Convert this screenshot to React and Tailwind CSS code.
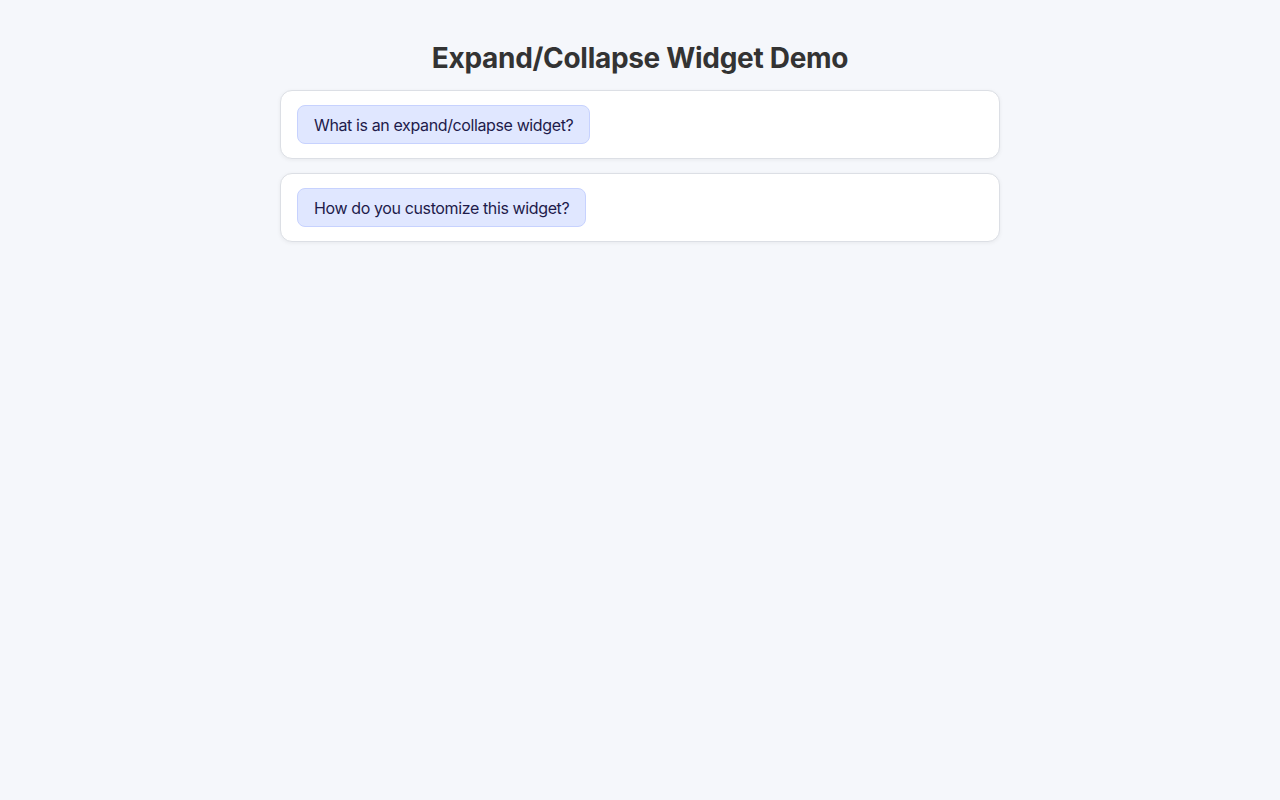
import { useState } from "react";

const items = [
  {
    q: "What is an expand/collapse widget?",
    a: "An expand/collapse widget shows or hides a section of content when its header is clicked.",
  },
  {
    q: "How do you customize this widget?",
    a: "Change the styles, the labels and the content inside each section to fit your page.",
  },
];

function Section({ item }) {
  const [open, setOpen] = useState(false);

  return (
    <div className="bg-white border border-[#dcdfe5] rounded-xl px-4 py-[14px] shadow-[0_1px_4px_rgba(0,0,0,0.06)]">
      <button
        type="button"
        onClick={() => setOpen(!open)}
        className="cursor-pointer h-[39px] bg-[#e0e7ff] border border-[#c7d2fe] rounded-lg px-4 text-base leading-6 tracking-[-0.38px] text-[#1e1b4b]">
        {item.q}
      </button>
      {open && <div className="mt-3 text-[#444] text-base">{item.a}</div>}
    </div>
  );
}

export default function App() {
  return (
    <div className="min-h-screen bg-[#f5f7fb] pt-[41px] font-['Inter',sans-serif]">
      <div className="w-[720px] mx-auto">
        <h1 className="text-center text-[28px] leading-[34px] font-bold tracking-[-0.3px] text-[#333] mb-[15px]">
          Expand/Collapse Widget Demo
        </h1>
        <div className="flex flex-col gap-[14px]">
          {items.map((item) => (
            <Section key={item.q} item={item} />
          ))}
        </div>
      </div>
    </div>
  );
}
